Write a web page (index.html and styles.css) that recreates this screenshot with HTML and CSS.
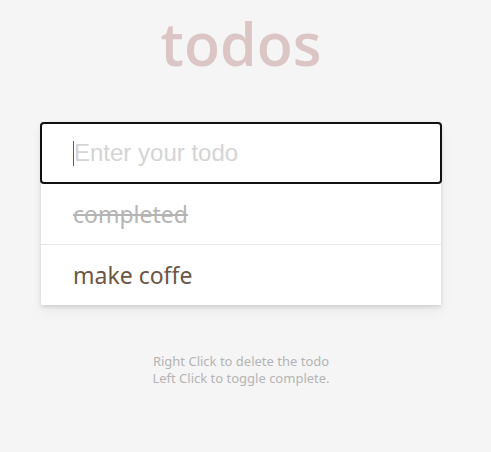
FILE: index.html
```html
<!DOCTYPE html>
<html>
<head>
<meta charset="utf-8">
<link rel="stylesheet" href="styles.css">
</head>
<body>
<div class="page">
  <div class="app">
    <h1 class="title">todos</h1>
    <div class="panel">
      <div class="new-todo"><span class="caret"></span><span class="placeholder">Enter your todo</span></div>
      <ul class="list">
        <li class="item done">completed</li>
        <li class="item">make coffe</li>
      </ul>
    </div>
    <div class="hints">
      <p>Right Click to delete the todo</p>
      <p>Left Click to toggle complete.</p>
    </div>
  </div>
</div>
</body>
</html>
```
FILE: styles.css
```css
html, body {
  margin: 0;
  padding: 0;
  background: #f5f5f5;
}
.page {
  width: 482px;
}
.app {
  width: 400px;
  margin: 0 auto;
  display: flex;
  flex-direction: column;
}
.title {
  margin: 8px 0 0 0;
  height: 114px;
  text-align: center;
  font-family: "Open Sans", sans-serif;
  font-weight: 600;
  font-size: 59px;
  line-height: 70px;
  color: #dcc5c5;
}
.panel {
  background: #fff;
  box-shadow: 0 2px 4px rgba(0,0,0,0.12), 0 6px 12px rgba(0,0,0,0.05);
}
.new-todo {
  margin: 0 -1px;
  height: 62px;
  box-sizing: border-box;
  border: 2px solid #111;
  border-radius: 4px;
  background: #fff;
  display: flex;
  align-items: center;
  padding-left: 31px;
}
.caret {
  width: 1px;
  height: 25px;
  background: #6b5a48;
}
.placeholder {
  font-family: "Liberation Sans", Arial, sans-serif;
  font-size: 24px;
  color: #d4d4d4;
}
.list {
  list-style: none;
  margin: 0;
  padding: 0;
}
.item {
  height: 60px;
  display: flex;
  align-items: center;
  padding-left: 32px;
  font-family: "Noto Sans", sans-serif;
  font-size: 23px;
  color: #6b5645;
}
.item + .item {
  border-top: 1px solid #e6e6e6;
}
.item.done {
  color: #b4b4b4;
  text-decoration: line-through;
}
.hints {
  margin-top: 48px;
  text-align: center;
  font-family: "Noto Sans", sans-serif;
  font-size: 13px;
  line-height: 17px;
  color: #b4b4b4;
}
.hints p {
  margin: 0;
}
```
